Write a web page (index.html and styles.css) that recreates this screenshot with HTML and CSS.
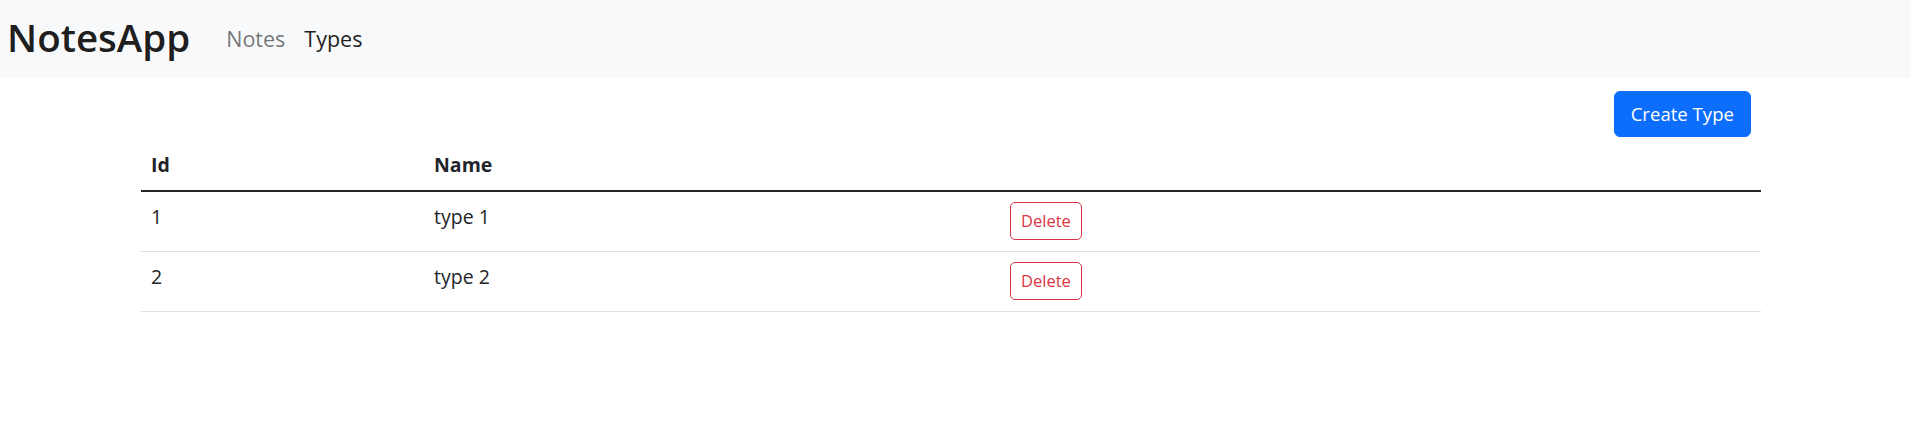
FILE: index.html
```html
<!DOCTYPE html>
<html lang="en">
<head>
<meta charset="utf-8">
<title>NotesApp - Types</title>
<link rel="stylesheet" href="styles.css">
</head>
<body>
<nav class="navbar">
  <a class="brand" href="#">NotesApp</a>
  <ul class="nav">
    <li><a class="nav-link" href="#">Notes</a></li>
    <li><a class="nav-link active" href="#">Types</a></li>
  </ul>
</nav>
<main class="container">
  <div class="toolbar">
    <button class="btn btn-primary" type="button">Create Type</button>
  </div>
  <table class="table">
    <thead>
      <tr>
        <th class="col-id">Id</th>
        <th class="col-name">Name</th>
        <th class="col-action"></th>
      </tr>
    </thead>
    <tbody>
      <tr>
        <td>1</td>
        <td>type 1</td>
        <td><button class="btn btn-sm btn-outline-danger" type="button">Delete</button></td>
      </tr>
      <tr>
        <td>2</td>
        <td>type 2</td>
        <td><button class="btn btn-sm btn-outline-danger" type="button">Delete</button></td>
      </tr>
    </tbody>
  </table>
</main>
</body>
</html>
```

FILE: styles.css
```css
* { box-sizing: border-box; }

html, body {
  margin: 0;
  padding: 0;
  background: #ffffff;
}

body {
  font-family: "Open Sans", "Noto Sans", "Liberation Sans", sans-serif;
  font-size: 19.5px;
  line-height: 30px;
  color: #212529;
}

.navbar {
  display: flex;
  align-items: center;
  height: 78px;
  padding: 0 0 0 7px;
  background: #f8f9fa;
}

.brand {
  font-size: 38.5px;
  line-height: 50px;
  font-weight: 600;
  color: rgba(0, 0, 0, 0.9);
  text-decoration: none;
  margin-right: 36px;
  margin-top: -4px;
}

.nav {
  display: flex;
  gap: 19px;
  list-style: none;
  margin: 0;
  padding: 0;
}

.nav-link {
  display: block;
  font-size: 21.5px;
  line-height: 30px;
  color: rgba(0, 0, 0, 0.55);
  text-decoration: none;
}

.nav-link.active {
  color: rgba(0, 0, 0, 0.9);
}

.container {
  width: 1620px;
  margin: 0 0 0 141px;
}

.toolbar {
  display: flex;
  justify-content: flex-end;
  padding: 13px 10px 3px 0;
}

.btn {
  display: inline-block;
  font-family: inherit;
  cursor: pointer;
  border: 1px solid transparent;
  background: transparent;
}

.btn-primary {
  height: 46px;
  padding: 0 16px;
  font-size: 18.6px;
  line-height: 44px;
  color: #ffffff;
  background: #0d6efd;
  border-color: #0d6efd;
  border-radius: 6px;
}

.btn-sm {
  height: 38px;
  padding: 0 10px;
  font-size: 16.5px;
  line-height: 36px;
  border-radius: 5px;
}

.btn-outline-danger {
  color: #dc3545;
  border-color: #dc3545;
  background: #ffffff;
}

.table {
  width: 100%;
  border-collapse: collapse;
  table-layout: fixed;
  color: #212529;
}

.table th,
.table td {
  text-align: left;
  vertical-align: top;
  padding: 10px 10px;
}

.table th {
  font-weight: 700;
  height: 50px;
}

.table thead tr {
  border-bottom: 2px solid #212529;
}

.table tbody tr {
  border-bottom: 1px solid #dee2e6;
}

.table td {
  padding-bottom: 11px;
}

.col-id { width: 283px; }
.col-name { width: 576px; }
.col-action { width: auto; }
```
